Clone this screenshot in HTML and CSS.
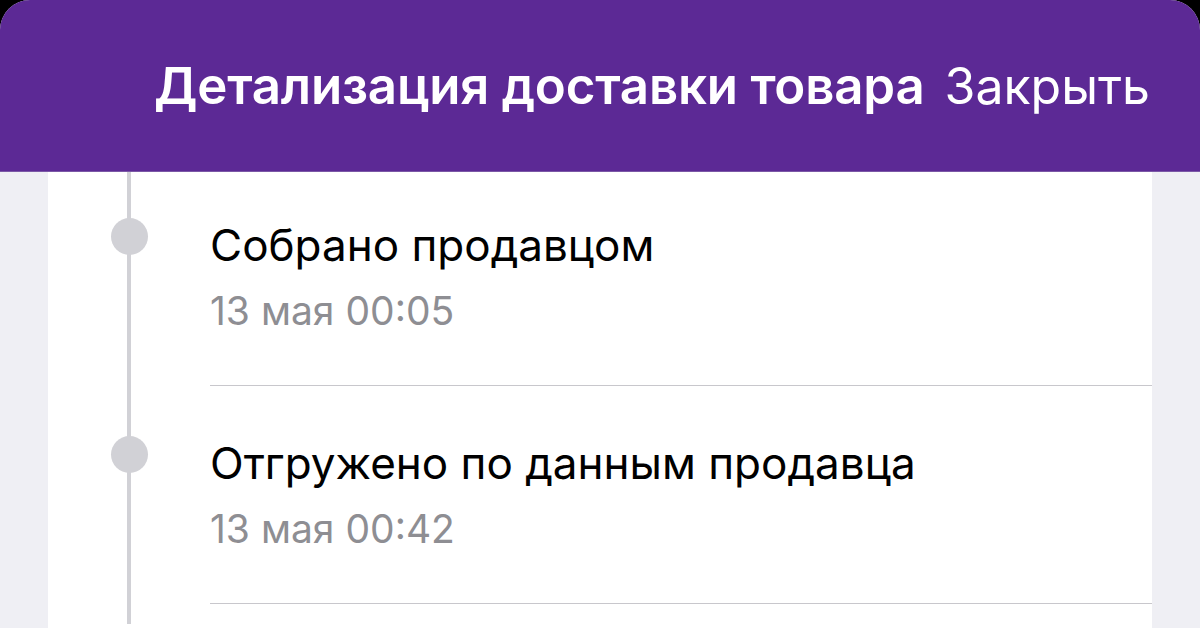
FILE: index.html
```html
<!DOCTYPE html>
<html lang="ru">
<head>
    <meta charset="UTF-8">
    <meta name="viewport" content="width=device-width, initial-scale=1.0">
    <title>Детализация доставки товара</title>
    <link rel="stylesheet" href="styles.css">
</head>
<body>
    <div class="sheet">
        <header class="header">
            <h1 class="header-title">Детализация доставки товара</h1>
            <button class="close-btn" type="button">Закрыть</button>
        </header>

        <div class="panel">
            <ul class="timeline">
                <li class="step">
                    <span class="dot"></span>
                    <div class="step-body">
                        <div class="step-title">Собрано продавцом</div>
                        <div class="step-date">13 мая 00:05</div>
                    </div>
                </li>
                <li class="step">
                    <span class="dot"></span>
                    <div class="step-body">
                        <div class="step-title">Отгружено по данным продавца</div>
                        <div class="step-date">13 мая 00:42</div>
                    </div>
                </li>
            </ul>
        </div>
    </div>
</body>
</html>
```

FILE: styles.css
```css
html, body {
    margin: 0;
    height: 100%;
}

body {
    background-color: #000;
    font-family: Inter, "Noto Sans", sans-serif;
    overflow: hidden;
}

.sheet {
    height: 100%;
    background-color: #efeff4;
    border-radius: 30px 30px 0 0;
    overflow: hidden;
    display: flex;
    flex-direction: column;
}

/* верхняя плашка */
.header {
    position: relative;
    z-index: 1;
    height: 172px;
    flex-shrink: 0;
    box-sizing: border-box;
    border-bottom: 1px solid #7b58a6;
    background-color: #5c2995;
    display: flex;
    align-items: center;
    justify-content: flex-end;
    gap: 20px;
    padding: 0 50px 0 0;
    color: #fff;
}

.header-title {
    margin: 0;
    font-size: 51px;
    font-weight: 600;
    letter-spacing: -0.2px;
    white-space: nowrap;
}

.close-btn {
    border: none;
    background: none;
    padding: 0;
    color: #fff;
    font-family: inherit;
    font-size: 50px;
    font-weight: 400;
    cursor: pointer;
}

/* белая панель со статусами */
.panel {
    flex: 1;
    margin: 0 48px;
    background-color: #fff;
    overflow: hidden;
}

.timeline {
    list-style: none;
    margin: -4px 0 0;
    padding: 0;
    background: linear-gradient(#d1d1d6, #d1d1d6) no-repeat 79px 0 / 4px 100%;
    min-height: 100%;
}

.step {
    display: grid;
    grid-template-columns: 162px 1fr;
}

.dot {
    justify-self: center;
    width: 37px;
    height: 37px;
    margin-top: 50px;
    border-radius: 50%;
    background-color: #d1d1d6;
}

.step-body {
    padding: 52px 0 50px;
    border-bottom: 1px solid #c8c7cc;
}

.step-title {
    font-size: 44px;
    line-height: 50px;
    color: #000;
}

.step-date {
    margin-top: 17px;
    font-size: 39px;
    line-height: 48px;
    color: #8e8e93;
}
```
